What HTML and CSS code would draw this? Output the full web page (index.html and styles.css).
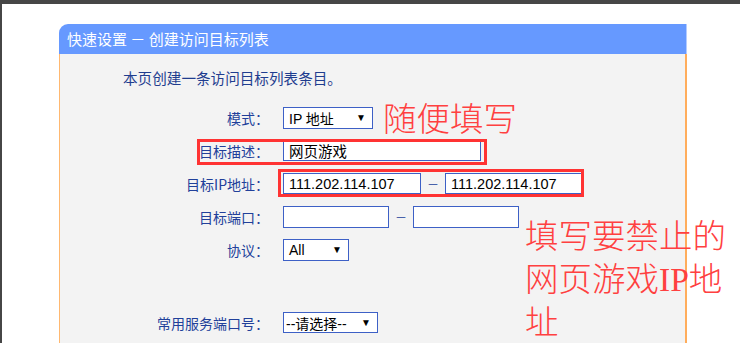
FILE: index.html
```html
<!DOCTYPE html>
<html lang="zh-CN">
<head>
    <meta charset="UTF-8">
    <meta name="viewport" content="width=device-width, initial-scale=1.0">
    <title>快速设置 - 创建访问目标列表</title>
    <link rel="stylesheet" href="styles.css">
</head>
<body>
    <div class="screen">
        <section class="panel">
            <header class="panel-title">快速设置 － 创建访问目标列表</header>
            <div class="panel-body">
                <p class="intro">本页创建一条访问目标列表条目。</p>

                <div class="row">
                    <label class="label">模式：</label>
                    <span class="select select-mode">IP 地址<i class="arrow">▼</i></span>
                </div>
                <div class="row">
                    <label class="label">目标描述：</label>
                    <input class="text text-desc" type="text" value="网页游戏">
                </div>
                <div class="row">
                    <label class="label">目标IP地址：</label>
                    <span class="range">
                        <input class="text text-ip" type="text" value="111.202.114.107">
                        <span class="dash">－</span>
                        <input class="text text-ip" type="text" value="111.202.114.107">
                    </span>
                </div>
                <div class="row">
                    <label class="label">目标端口：</label>
                    <span class="range">
                        <input class="text text-port" type="text">
                        <span class="dash">－</span>
                        <input class="text text-port" type="text">
                    </span>
                </div>
                <div class="row">
                    <label class="label">协议：</label>
                    <span class="select select-proto">All<i class="arrow">▼</i></span>
                </div>
                <div class="spacer"></div>
                <div class="row">
                    <label class="label">常用服务端口号：</label>
                    <span class="select select-service">--请选择--<i class="arrow">▼</i></span>
                </div>
            </div>

            <!-- annotations drawn over the form -->
            <div class="mark mark-desc"></div>
            <div class="mark mark-ip"></div>
            <div class="note note-any">随便填写</div>
            <div class="note note-ip">填写要禁止的<br>网页游戏IP地<br>址</div>
        </section>
    </div>
</body>
</html>
```

FILE: styles.css
```css
html, body {
    margin: 0;
    padding: 0;
    height: 100%;
    overflow: hidden;
}

body {
    font-family: "Noto Sans CJK SC", "Liberation Sans", sans-serif;
    background-color: #fff;
}

.screen {
    box-sizing: border-box;
    height: 100%;
    border-top: 4px solid #464646;
    border-left: 2px solid #464646;
    padding: 20px 0 0 57px;
}

.panel {
    position: relative;
    width: 628px;
}

.panel-title {
    height: 30px;
    line-height: 30px;
    padding-left: 8px;
    background-color: #6699ff;
    color: #fff;
    font-size: 15px;
    border-top-left-radius: 9px;
    border-right: 1px solid #b3cbff;
}

.panel-body {
    height: 289px;
    background-color: #f3f3f3;
    border-left: 1px solid #ffb870;
    border-right: 2px solid #ffad5c;
}

.intro {
    margin: 0;
    padding: 14px 0 0 63px;
    height: 33px;
    line-height: 20px;
    font-size: 14.6px;
    color: #1f3d8f;
}

.row {
    display: grid;
    grid-template-columns: 209px auto;
    column-gap: 14px;
    align-items: center;
    height: 33px;
}

.label {
    text-align: right;
    font-size: 14px;
    color: #21409a;
}

.spacer {
    height: 40px;
}

.select,
.text {
    box-sizing: border-box;
    height: 22px;
    background-color: #fff;
    border: 1px solid #3d60c6;
    color: #000;
    font-size: 14px;
}

.select {
    display: flex;
    align-items: center;
    justify-content: space-between;
    padding: 0 6px 0 5px;
    font-family: "Liberation Sans", "Noto Sans CJK SC", sans-serif;
}

.arrow {
    font-style: normal;
    font-size: 10px;
}

.select-mode {
    width: 90px;
}

.select-proto {
    width: 66px;
}

.select-service {
    width: 95px;
    height: 21px;
    padding-left: 2px;
}

.text {
    padding: 0 5px;
    font-family: "Liberation Sans", "Noto Sans CJK SC", sans-serif;
    font-size: 14.5px;
    outline: none;
}

.text-desc {
    width: 198px;
    height: 20px;
}

.text-ip {
    width: 138px;
    height: 21px;
}

.text-port {
    width: 106px;
    height: 22px;
}

.range {
    display: flex;
    align-items: center;
}

.dash {
    width: 24px;
    text-align: center;
    font-size: 12px;
    color: #21409a;
}

.mark {
    position: absolute;
    box-sizing: border-box;
    border: 3px solid #ff3333;
}

.mark-desc {
    left: 138px;
    top: 115px;
    width: 290px;
    height: 26px;
}

.mark-ip {
    left: 219px;
    top: 145px;
    width: 306px;
    height: 28px;
}

.note {
    position: absolute;
    font-family: "Liberation Serif", "Noto Sans CJK SC", serif;
    font-weight: 300;
    font-size: 33.5px;
    line-height: 43px;
    color: #ff4040;
    white-space: nowrap;
}

.note-any {
    left: 324px;
    top: 74px;
}

.note-ip {
    left: 466px;
    top: 191px;
}
```
